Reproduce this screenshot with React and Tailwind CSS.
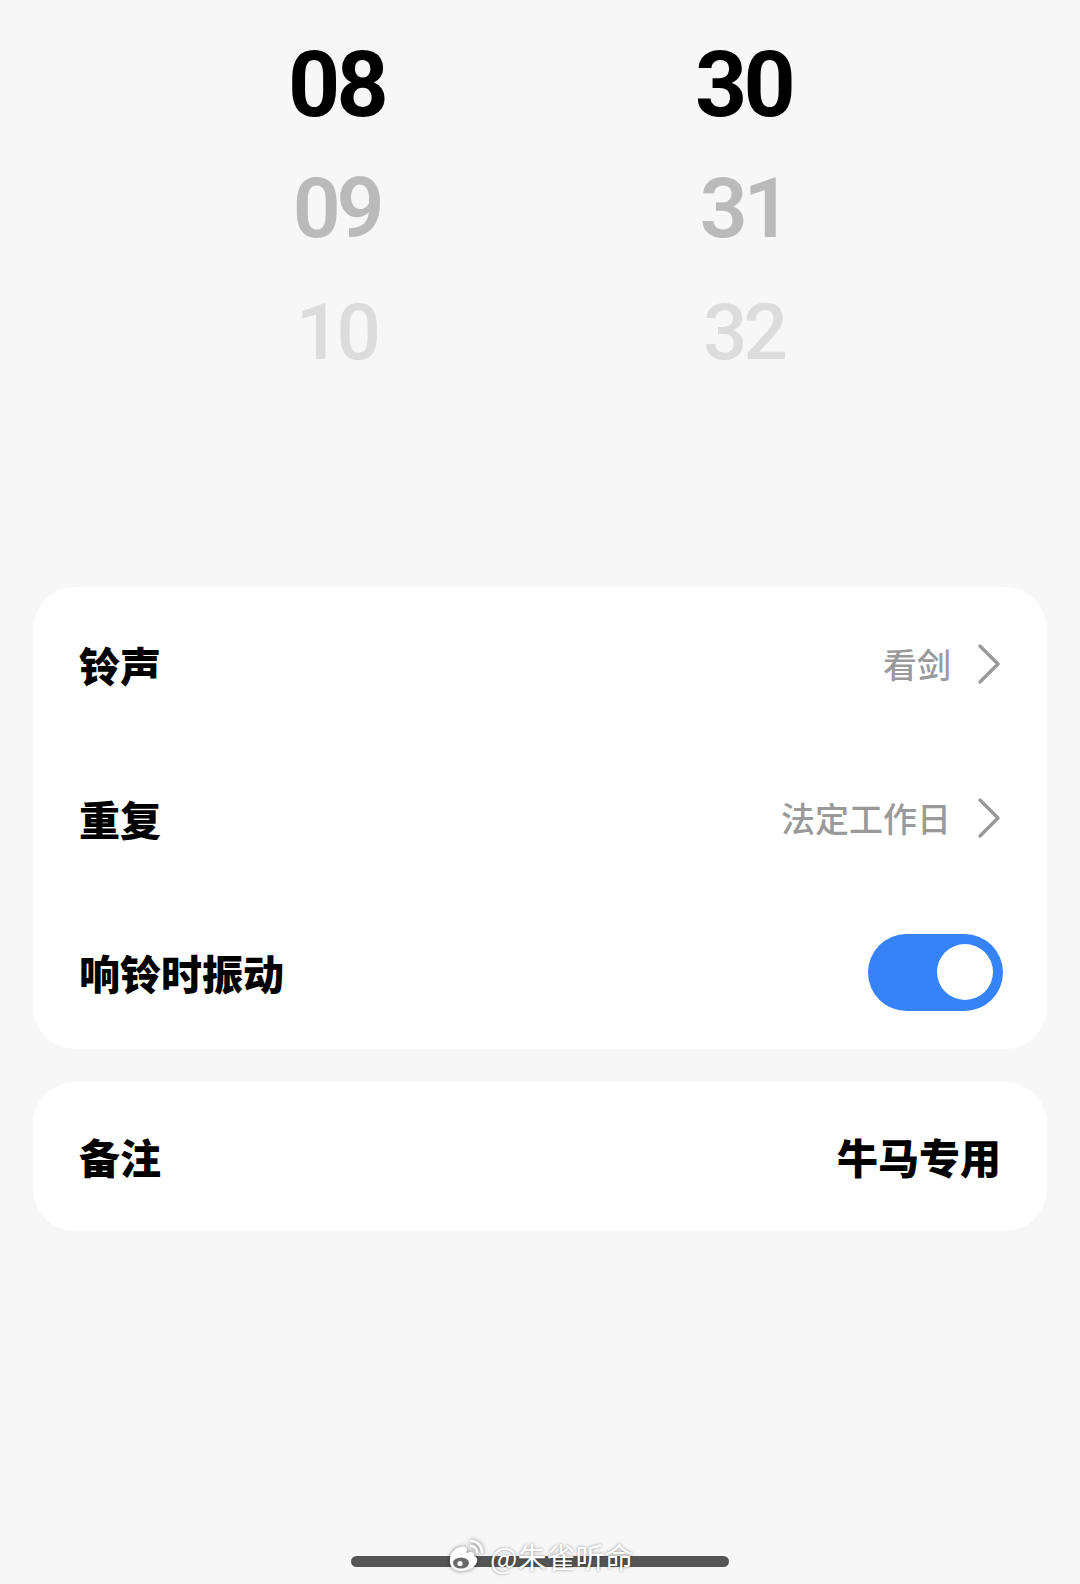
import React from "react";

const cjk = { fontFamily: '"Noto Sans CJK SC", "Noto Sans", sans-serif' };
const num = { fontFamily: 'Roboto, "Noto Sans", sans-serif' };

const Chevron = () => (
  <svg width="24" height="42" viewBox="0 0 24 42" fill="none">
    <polyline points="3,3 21,21 3,39" stroke="#9a9a9a" strokeWidth="3.4" strokeLinecap="round" strokeLinejoin="round" />
  </svg>
);

const Row = ({ label, children }) => (
  <div className="h-[154px] flex items-center justify-between pl-[46px] pr-[46px]">
    <span className="text-[41px] font-black text-black leading-none">{label}</span>
    {children}
  </div>
);

const App = () => {
  return (
    <div className="w-[1080px] h-[1584px] bg-[#f7f7f7] flex flex-col" style={cjk}>
      {/* time picker */}
      <div className="pt-[23px] flex justify-center gap-[207px]" style={num}>
        <div className="w-[200px] flex flex-col items-center">
          <div className="h-[124px] flex items-center text-[91px] font-bold text-black tracking-[-0.04em] leading-none">08</div>
          <div className="h-[124px] flex items-center text-[84px] font-semibold text-[#bababa] tracking-[-0.05em] leading-none">09</div>
          <div className="h-[124px] flex items-center text-[78px] font-medium text-[#dcdcdc] tracking-[-0.05em] leading-none">10</div>
        </div>
        <div className="w-[200px] flex flex-col items-center">
          <div className="h-[124px] flex items-center text-[91px] font-bold text-black tracking-[-0.04em] leading-none">30</div>
          <div className="h-[124px] flex items-center text-[84px] font-semibold text-[#bababa] tracking-[-0.05em] leading-none">31</div>
          <div className="h-[124px] flex items-center text-[78px] font-medium text-[#dcdcdc] tracking-[-0.05em] leading-none">32</div>
        </div>
      </div>

      {/* settings card */}
      <div className="mt-[192px] mx-[33px] bg-white rounded-[42px] flex flex-col">
        <Row label="铃声">
          <div className="flex items-center gap-[26px]">
            <span className="text-[34px] font-medium text-[#9a9a9a] leading-none">看剑</span>
            <Chevron />
          </div>
        </Row>
        <Row label="重复">
          <div className="flex items-center gap-[26px]">
            <span className="text-[34px] font-medium text-[#9a9a9a] leading-none">法定工作日</span>
            <Chevron />
          </div>
        </Row>
        <Row label="响铃时振动">
          <div className="w-[135px] h-[77px] rounded-full bg-[#3583f6] flex items-center justify-end pr-[10px] mr-[-2px]">
            <div className="w-[56px] h-[56px] rounded-full bg-white" />
          </div>
        </Row>
      </div>

      {/* note card */}
      <div className="mt-[33px] mx-[33px] bg-white rounded-[42px] h-[149px] flex items-center justify-between pl-[46px] pr-[46px]">
        <span className="text-[41px] font-black text-black leading-none">备注</span>
        <span className="text-[41px] font-black text-black leading-none">牛马专用</span>
      </div>

      <div className="flex-1" />

      {/* home indicator + watermark */}
      <div className="relative flex justify-center pb-[17px]">
        <div className="w-[378px] h-[11px] rounded-full bg-[#555555]" />
        <div className="absolute left-[446px] top-[-17px] flex items-center gap-[6px]" style={{ textShadow: "0 0 3px rgba(0,0,0,0.45)" }}>
          <svg width="38" height="34" viewBox="0 0 38 34" fill="none" style={{ filter: "drop-shadow(0 0 2px rgba(0,0,0,0.5))" }}>
            <path d="M4 20 C4 12 14 6 19 8 C22 9 21 12 20 14 C25 12 29 13 28 17 C32 18 32 22 30 25 C27 30 20 32 15 32 C8 32 3 28 4 20 Z" fill="#ffffff" />
            <ellipse cx="15" cy="24" rx="8" ry="5.5" fill="#6a6a6a" />
            <circle cx="14" cy="24.5" r="2.6" fill="#ffffff" />
            <path d="M25 2 A11 11 0 0 1 36 13" stroke="#ffffff" strokeWidth="2.6" strokeLinecap="round" />
            <path d="M25 7 A6 6 0 0 1 31 13" stroke="#ffffff" strokeWidth="2.4" strokeLinecap="round" />
          </svg>
          <span className="text-[29px] text-white leading-none">@朱雀听命</span>
        </div>
      </div>
    </div>
  );
};

export default App;
